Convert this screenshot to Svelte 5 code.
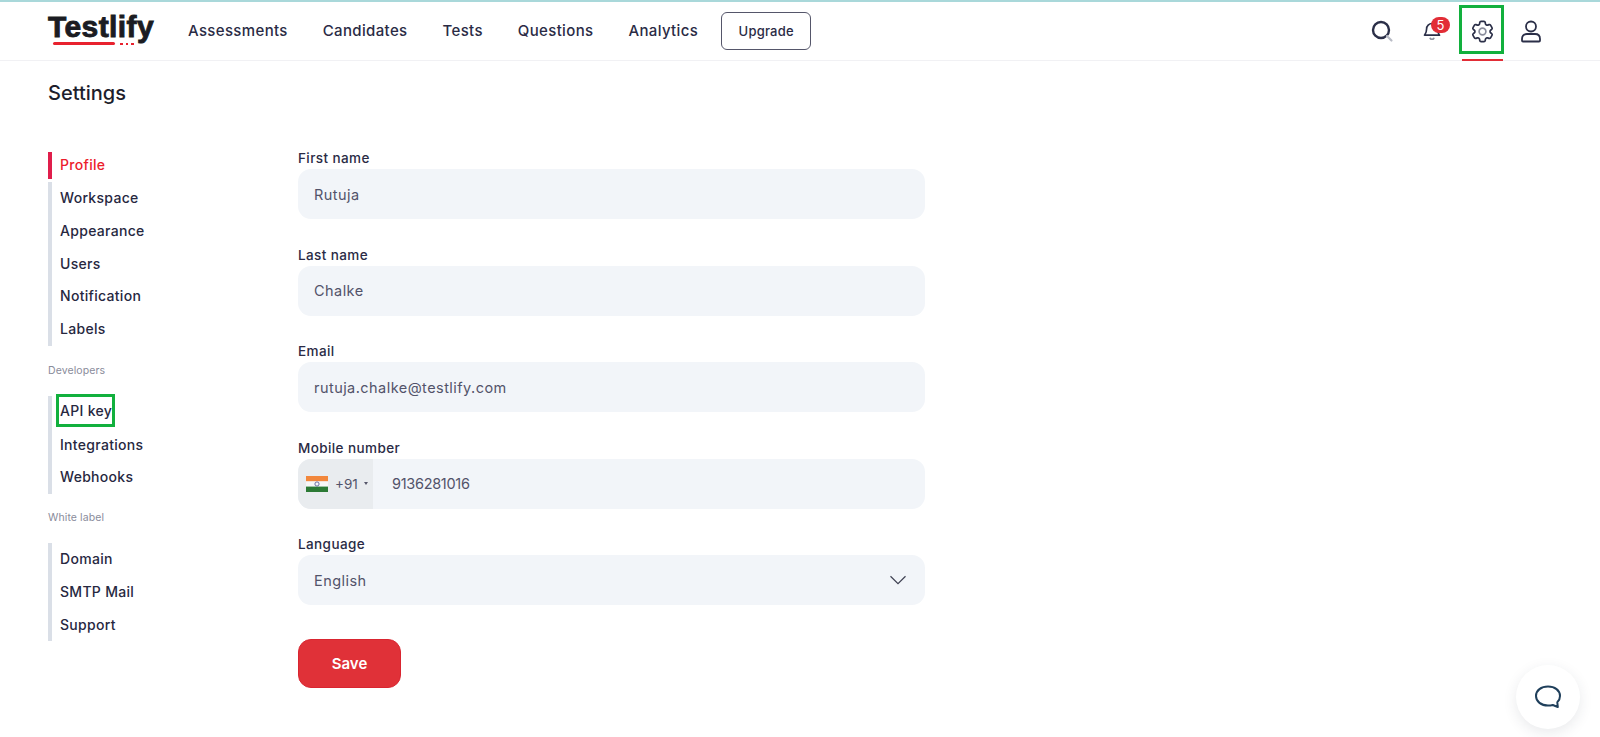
<script>
  const navItems = ['Assessments', 'Candidates', 'Tests', 'Questions', 'Analytics'];
  const groupOne = ['Workspace', 'Appearance', 'Users', 'Notification', 'Labels'];
  const groupTwo = ['API key', 'Integrations', 'Webhooks'];
  const groupThree = ['Domain', 'SMTP Mail', 'Support'];
  const fields = [
    { label: 'First name', value: 'Rutuja' },
    { label: 'Last name', value: 'Chalke' },
    { label: 'Email', value: 'rutuja.chalke@testlify.com' }
  ];
</script>

<div class="page">
  <header class="topbar">
    <div class="logo">
      <span class="logo-word">Testlify</span>
      <span class="logo-line"></span>
      <span class="logo-dots"><i></i><i></i><i></i></span>
    </div>
    <nav class="mainnav">
      {#each navItems as item}
        <span class="navlink">{item}</span>
      {/each}
    </nav>
    <button class="upgrade">Upgrade</button>
    <div class="tools">
      <span class="tool search">
        <svg width="24" height="24" viewBox="0 0 24 24" fill="none">
          <circle cx="11" cy="11" r="8" stroke="#2b2f48" stroke-width="2.4" />
          <path d="M17 17l4.5 4.5" stroke="#b9bcc6" stroke-width="2.2" stroke-linecap="round" />
        </svg>
      </span>
      <span class="tool bell">
        <svg width="20" height="20" viewBox="0 0 24 24" fill="none" stroke="#2b2f48" stroke-width="2" stroke-linejoin="round">
          <path d="M12 3a6.5 6.5 0 0 0-6.5 6.5c0 4.5-1.5 6-2.5 7.5h18c-1-1.5-2.5-3-2.5-7.5A6.5 6.5 0 0 0 12 3Z" />
          <path d="M9.5 20a2.6 2.6 0 0 0 5 0" stroke="#8a8d9c" />
        </svg>
        <span class="badge">5</span>
      </span>
      <span class="tool gear">
        <svg width="27" height="27" viewBox="0 0 24 24" fill="none" stroke="#2b2f48" stroke-width="1.5" stroke-linejoin="round">
          <path d="M9.594 3.94c.09-.542.56-.94 1.11-.94h2.593c.55 0 1.02.398 1.11.94l.213 1.281c.063.374.313.686.645.87.074.04.147.083.22.127.325.196.72.257 1.075.124l1.217-.456a1.125 1.125 0 0 1 1.37.49l1.296 2.247a1.125 1.125 0 0 1-.26 1.431l-1.003.827c-.293.241-.438.613-.43.992a7.723 7.723 0 0 1 0 .255c-.008.378.137.75.43.991l1.004.827c.424.35.534.955.26 1.43l-1.298 2.247a1.125 1.125 0 0 1-1.369.491l-1.217-.456c-.355-.133-.75-.072-1.076.124a6.47 6.47 0 0 1-.22.128c-.331.183-.581.495-.644.869l-.213 1.281c-.09.543-.56.94-1.11.94h-2.594c-.55 0-1.019-.398-1.11-.94l-.213-1.281c-.062-.374-.312-.686-.644-.87a6.52 6.52 0 0 1-.22-.127c-.325-.196-.72-.257-1.076-.124l-1.217.456a1.125 1.125 0 0 1-1.369-.49l-1.297-2.247a1.125 1.125 0 0 1 .26-1.431l1.004-.827c.292-.24.437-.613.43-.991a6.932 6.932 0 0 1 0-.255c.007-.38-.138-.751-.43-.992l-1.004-.827a1.125 1.125 0 0 1-.26-1.43l1.297-2.247a1.125 1.125 0 0 1 1.37-.491l1.216.456c.356.133.751.072 1.076-.124.072-.044.146-.086.22-.128.332-.183.582-.495.644-.869l.214-1.28Z" />
          <circle cx="12" cy="12" r="3" stroke="#8a8d9c" />
        </svg>
        <span class="mark"></span>
        <span class="underline"></span>
      </span>
      <span class="tool user">
        <svg width="24" height="24" viewBox="0 0 24 24" fill="none" stroke="#2b2f48" stroke-width="1.8">
          <circle cx="12" cy="7.5" r="5" />
          <path d="M3 21.5v-1.5c0-3 2-5 5-5h8c3 0 5 2 5 5v1.5c0 .6-.4 1-1 1H4c-.6 0-1-.4-1-1Z" />
        </svg>
      </span>
    </div>
  </header>

  <h1 class="title">Settings</h1>

  <div class="content">
    <aside class="sidebar">
      <div class="item active">Profile</div>
      <div class="group">
        {#each groupOne as item}
          <div class="item">{item}</div>
        {/each}
      </div>
      <div class="caption first">Developers</div>
      <div class="group api-group">
        {#each groupTwo as item}
          <div class="item">
            {item}
            {#if item === 'API key'}<span class="mark api"></span>{/if}
          </div>
        {/each}
      </div>
      <div class="caption">White label</div>
      <div class="group">
        {#each groupThree as item}
          <div class="item">{item}</div>
        {/each}
      </div>
    </aside>

    <form class="form">
      {#each fields as field}
        <div class="field">
          <div class="label">{field.label}</div>
          <div class="input">{field.value}</div>
        </div>
      {/each}

      <div class="field">
        <div class="label">Mobile number</div>
        <div class="input phone">
          <span class="dial">
            <svg class="flag" width="22" height="16" viewBox="0 0 22 16">
              <rect width="22" height="5.4" fill="#f2873c" />
              <rect y="5.4" width="22" height="5.2" fill="#f7f7f7" />
              <rect y="10.6" width="22" height="5.4" fill="#2c7a35" />
              <circle cx="11" cy="8" r="2.1" fill="none" stroke="#5a5f9a" stroke-width="0.9" />
            </svg>
            <span class="code">+91</span>
            <span class="caret"></span>
          </span>
          <span class="number">9136281016</span>
        </div>
      </div>

      <div class="field">
        <div class="label">Language</div>
        <div class="input select">
          <span>English</span>
          <svg width="18" height="10" viewBox="0 0 18 10" fill="none" stroke="#3f4152" stroke-width="1.2">
            <path d="M1.5 1.2 9 8.6l7.5-7.4" />
          </svg>
        </div>
      </div>

      <button class="save" type="button">Save</button>
    </form>
  </div>

  <div class="chat">
    <svg width="28" height="26" viewBox="0 0 28 26" fill="none" stroke="#1f3f5b" stroke-width="2" stroke-linejoin="round">
      <path d="M14 2.5c6.8 0 12 3.9 12 9.5 0 2.6-1 4.7-2.7 6.3l.5 4.7-5-2c-1.5.4-3.1.6-4.8.6-6.8 0-12-4-12-9.6S7.2 2.5 14 2.5Z" />
    </svg>
  </div>
</div>

<style>
  :global(body) {
    margin: 0;
    background: #fff;
  }
  .page {
    position: relative;
    height: 737px;
    overflow: hidden;
    font-family: Inter, "Open Sans", sans-serif;
    color: #2a2b45;
    background: #fff;
  }
  .topbar {
    display: flex;
    align-items: center;
    height: 58px;
    padding-left: 48px;
    border-top: 2px solid #a9d8da;
    border-bottom: 1px solid #f1f1f4;
  }
  .logo {
    position: relative;
    width: 106px;
    height: 44px;
    margin-right: 34px;
  }
  .logo-word {
    position: absolute;
    left: 0;
    top: 0;
    font-size: 30px;
    line-height: 36px;
    font-weight: 800;
    letter-spacing: 0.4px;
    color: #1b1c22;
    font-family: "Liberation Sans", Inter, sans-serif;
    -webkit-text-stroke: 0.9px #1b1c22;
  }
  .logo-line {
    position: absolute;
    left: 5px;
    top: 33px;
    width: 62px;
    height: 2.5px;
    background: #e8222e;
    border-radius: 2px;
  }
  .logo-dots {
    position: absolute;
    left: 72px;
    top: 33.5px;
    display: flex;
    gap: 3px;
  }
  .logo-dots i {
    width: 2.5px;
    height: 2.5px;
    background: #e8222e;
  }
  .mainnav {
    display: flex;
    gap: 35px;
  }
  .navlink {
    font-size: 15px;
    font-weight: 500;
    letter-spacing: 0.35px;
    line-height: 22px;
  }
  .upgrade {
    margin-left: 23px;
    width: 90px;
    height: 38px;
    padding: 0;
    border: 1px solid #55566a;
    border-radius: 6px;
    background: #fff;
    font: 500 13px Inter, sans-serif;
    letter-spacing: 0.2px;
    color: #2a2b45;
  }
  .tools {
    margin-left: auto;
    margin-right: 44px;
    display: flex;
    align-items: center;
  }
  .tool {
    position: relative;
    display: flex;
    align-items: center;
    justify-content: center;
    width: 50px;
    height: 40px;
  }
  .tool.user {
    margin-left: -1px;
  }
  .badge {
    position: absolute;
    left: 24px;
    top: 6px;
    width: 19px;
    height: 16px;
    border-radius: 8px;
    background: #e22d36;
    color: #fff;
    font-size: 13px;
    line-height: 16px;
    text-align: center;
  }
  .mark {
    position: absolute;
    box-sizing: border-box;
    border: 3px solid #12b03d;
    pointer-events: none;
  }
  .gear .mark {
    left: 2px;
    top: -6px;
    width: 45px;
    height: 49px;
  }
  .underline {
    position: absolute;
    left: 5px;
    top: 48px;
    width: 41px;
    height: 2px;
    background: #e22d36;
  }
  .title {
    margin: 0;
    padding: 20px 0 0 48px;
    height: 65px;
    box-sizing: border-box;
    font-size: 20px;
    line-height: 24px;
    font-weight: 500;
    letter-spacing: 0;
    color: #1d1e2c;
  }
  .content {
    display: flex;
    padding: 21px 0 0 48px;
  }
  .sidebar {
    width: 250px;
    padding-top: 5px;
    flex: none;
  }
  .group {
    border-left: 4px solid #dadfe7;
    margin-top: 3px;
  }
  .api-group .item:first-child {
    line-height: 29px;
  }
  .item {
    position: relative;
    height: 32.75px;
    line-height: 32.75px;
    padding-left: 8px;
    font-size: 14px;
    font-weight: 500;
    letter-spacing: 0.3px;
    color: #27283f;
  }
  .item.active {
    height: 27px;
    line-height: 25px;
    border-left: 4px solid #e01e4b;
    color: #ec1c2c;
  }
  .caption {
    height: 19px;
    line-height: 19px;
    font-size: 10.5px;
    color: #8a8c9b;
    letter-spacing: 0.1px;
  }
  .caption.first {
    margin: 15px 0 16px;
  }
  .caption:not(.first) {
    margin: 14px 0 16px;
  }
  .mark.api {
    left: 4px;
    top: -2px;
    width: 59px;
    height: 33px;
  }
  .form {
    width: 627px;
  }
  .field {
    margin-bottom: 24.5px;
  }
  .field:last-of-type {
    margin-bottom: 34px;
  }
  .label {
    height: 22px;
    line-height: 22px;
    font-size: 13.5px;
    font-weight: 450;
    letter-spacing: 0.4px;
    color: #2a2b45;
  }
  .input {
    display: flex;
    align-items: center;
    height: 50px;
    padding-left: 16px;
    background: #f2f5f9;
    border-radius: 13px;
    font-size: 14.5px;
    letter-spacing: 0.45px;
    color: #52536a;
  }
  .phone {
    padding-left: 0;
    overflow: hidden;
  }
  .dial {
    display: flex;
    align-items: center;
    width: 75px;
    height: 100%;
    padding-left: 8px;
    box-sizing: border-box;
    background: #e9ecef;
    flex: none;
  }
  .flag {
    flex: none;
  }
  .code {
    margin-left: 7px;
    font-size: 13.5px;
    letter-spacing: 0;
  }
  .caret {
    margin-left: 6px;
    border-left: 2.5px solid transparent;
    border-right: 2.5px solid transparent;
    border-top: 3.5px solid #55566a;
  }
  .number {
    margin-left: 19px;
    letter-spacing: -0.3px;
  }
  .select {
    justify-content: space-between;
    padding-right: 18px;
  }
  .save {
    display: block;
    width: 103px;
    height: 49px;
    padding: 0;
    border: 1px solid #d92530;
    border-radius: 13px;
    background: #e03138;
    color: #fff;
    font: 600 15px Inter, sans-serif;
  }
  .chat {
    position: absolute;
    left: 1516px;
    top: 665px;
    width: 64px;
    height: 64px;
    display: flex;
    align-items: center;
    justify-content: center;
    border-radius: 50%;
    background: #fff;
    box-shadow: 0 4px 14px rgba(40, 50, 70, 0.1);
  }
</style>
